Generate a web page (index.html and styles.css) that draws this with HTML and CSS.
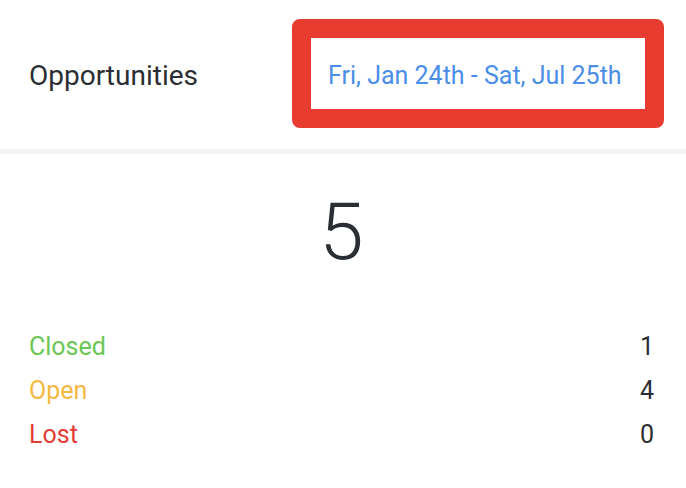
FILE: index.html
```html
<!DOCTYPE html>
<html lang="en">
<head>
    <meta charset="UTF-8">
    <meta name="viewport" content="width=device-width, initial-scale=1.0">
    <title>Opportunities</title>
    <link rel="stylesheet" href="styles.css">
</head>
<body>
    <div class="card">
        <div class="card-header">
            <h2 class="card-title">Opportunities</h2>
            <div class="highlight">
                <span class="date-range">Fri, Jan 24th - Sat, Jul 25th</span>
            </div>
        </div>
        <div class="card-body">
            <div class="total">5</div>
            <div class="stats">
                <div class="stat-row">
                    <span class="stat-label closed">Closed</span>
                    <span class="stat-value">1</span>
                </div>
                <div class="stat-row">
                    <span class="stat-label open">Open</span>
                    <span class="stat-value">4</span>
                </div>
                <div class="stat-row">
                    <span class="stat-label lost">Lost</span>
                    <span class="stat-value">0</span>
                </div>
            </div>
        </div>
    </div>
</body>
</html>
```

FILE: styles.css
```css
body {
    font-family: Roboto, "Liberation Sans", sans-serif;
    margin: 0;
    padding: 0;
    background-color: white;
    color: #2b2f33;
}
.card {
    width: 686px;
    min-height: 488px;
}
.card-header {
    height: 154px;
    display: flex;
    justify-content: space-between;
    align-items: center;
    padding: 0 22px 5px 29px;
    box-sizing: border-box;
    border-bottom: 5px solid #f2f5f8;
}
.card-title {
    margin: 0;
    font-size: 28px;
    font-weight: 400;
    color: #2b2f33;
    position: relative;
    top: 3px;
}
.highlight {
    border: 19px solid #e93c30;
    border-radius: 8px;
    height: 71px;
    width: 317px;
    display: flex;
    align-items: center;
    padding-left: 17px;
    box-sizing: content-box;
    margin-top: 2px;
}
.date-range {
    font-size: 25px;
    color: #4a8ee8;
    position: relative;
    top: 2px;
}
.card-body {
    padding: 30px 32px 0 29px;
}
.total {
    text-align: center;
    font-size: 80px;
    font-weight: 300;
    line-height: 96px;
    color: #2b2f33;
}
.stats {
    margin-top: 44px;
}
.stat-row {
    display: flex;
    justify-content: space-between;
    align-items: center;
    height: 44px;
    font-size: 25px;
}
.closed {
    color: #6cc655;
}
.open {
    color: #f4b942;
}
.lost {
    color: #e23d34;
}
.stat-value {
    color: #2b2f33;
}
```
